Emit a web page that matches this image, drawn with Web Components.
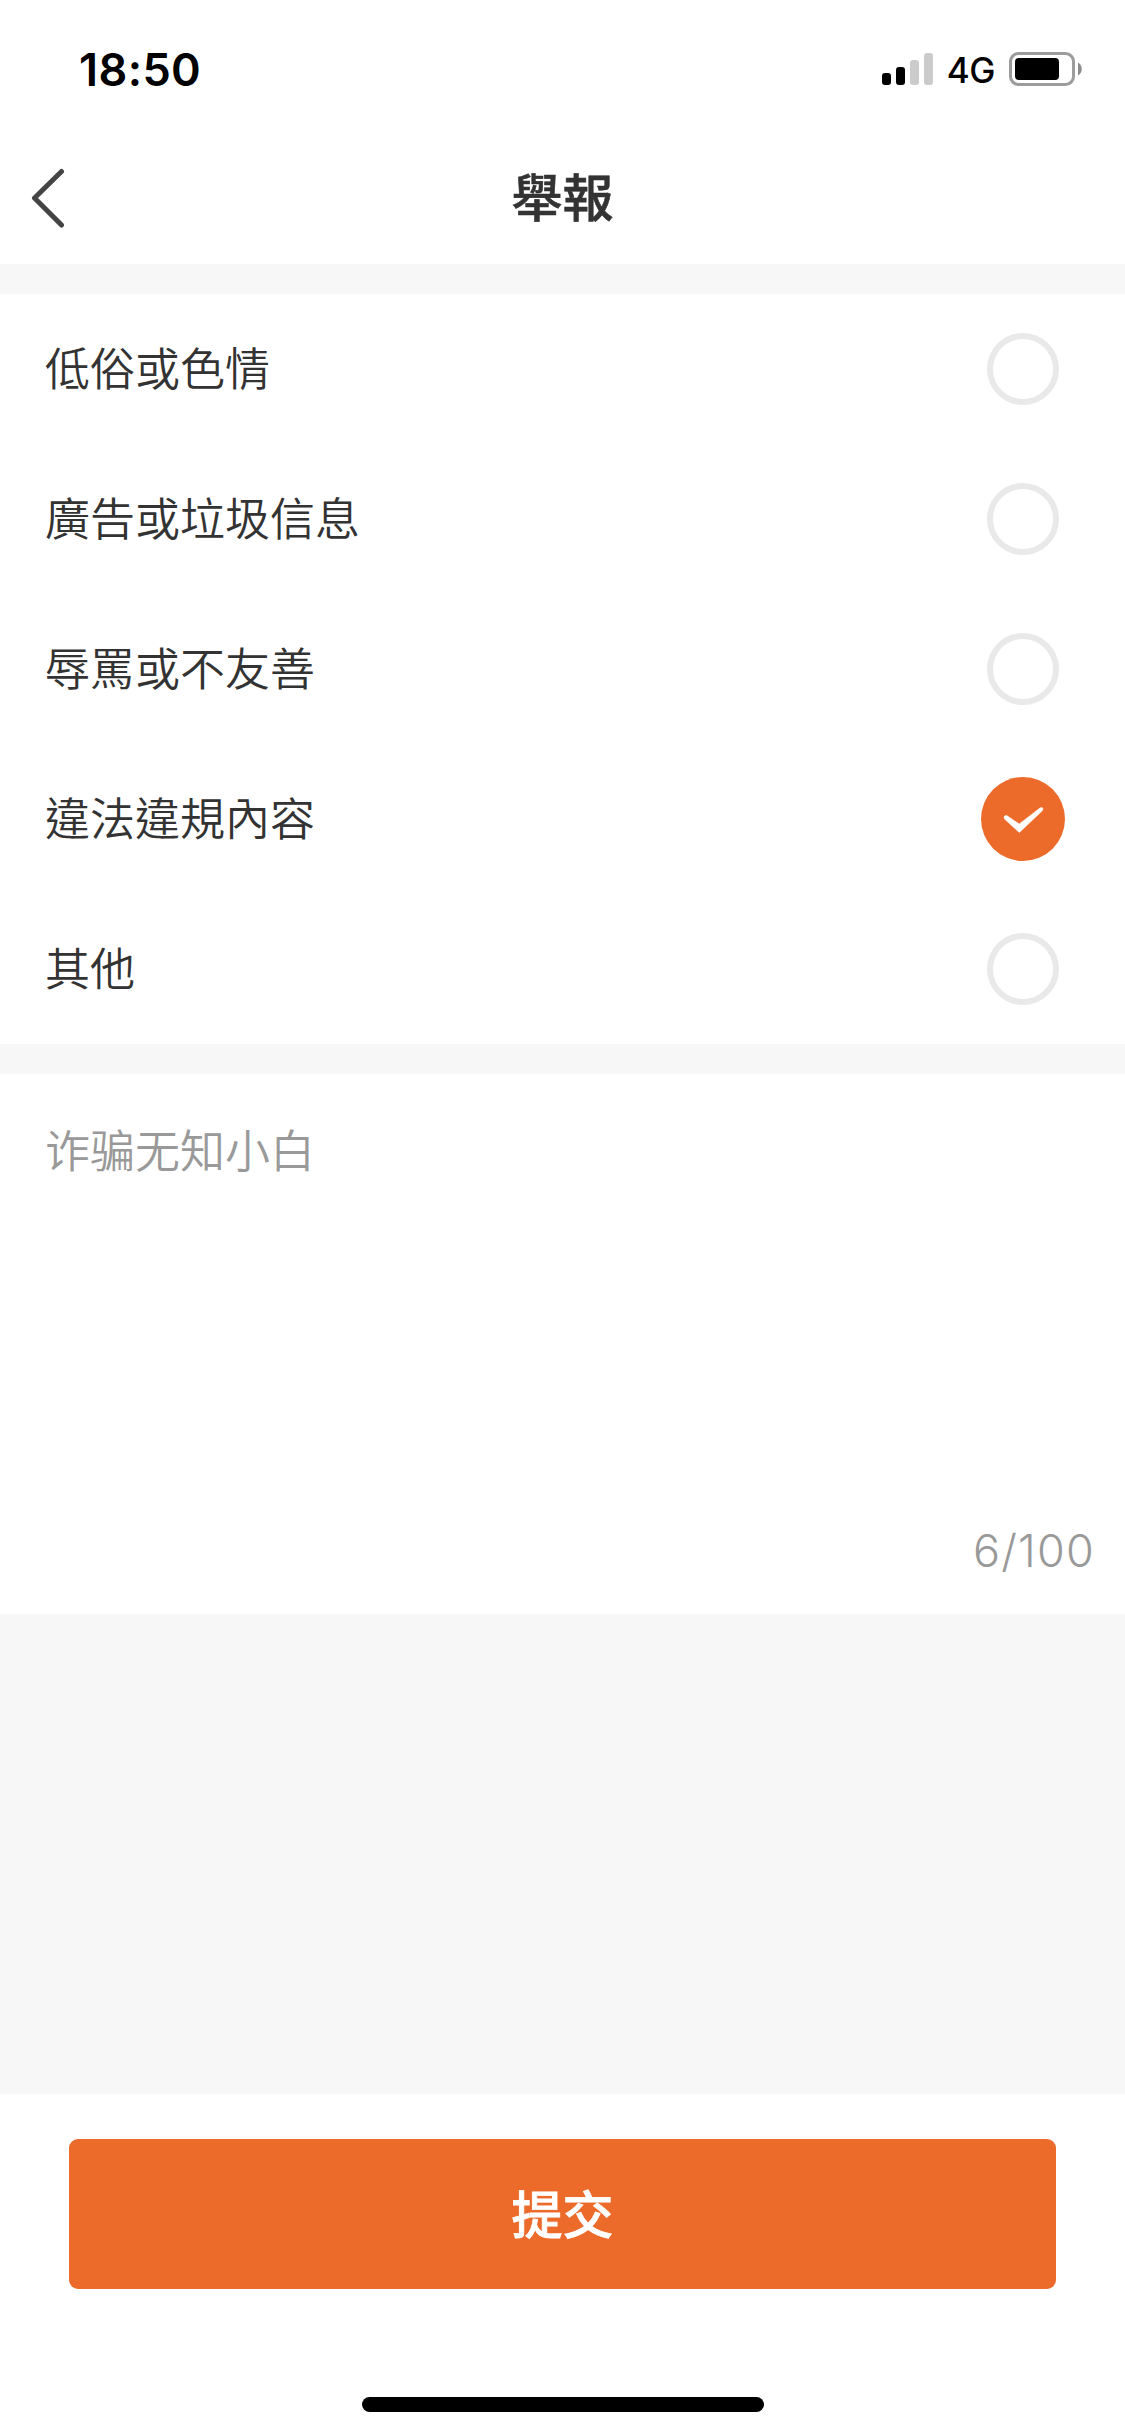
<!DOCTYPE html>
<html lang="zh-Hant">
<head>
<meta charset="utf-8">
<meta name="viewport" content="width=device-width">
<title>舉報</title>
<style>
  body {
    margin: 0;
    background-color: #f7f7f7;
    color: #333;
    font-family: Inter, "Noto Sans CJK TC", sans-serif;
    font-size: 45px;
  }
</style>
</head>
<body>
<report-page>
  <status-bar slot="header" time="18:50" network="4G"></status-bar>
  <nav-bar slot="header">舉報</nav-bar>
  <reason-list>
    <reason-item>低俗或色情</reason-item>
    <reason-item>廣告或垃圾信息</reason-item>
    <reason-item>辱罵或不友善</reason-item>
    <reason-item checked>違法違規內容</reason-item>
    <reason-item>其他</reason-item>
  </reason-list>
  <report-note max="100" lang="zh-Hans">诈骗无知小白</report-note>
  <submit-bar slot="footer">提交</submit-bar>
</report-page>

<script>
/**
 * Creates a template element from markup.
 *
 * @param {string} html the markup.
 * @returns {HTMLTemplateElement} The template.
 */
function createTemplate (html) {
  const template = document.createElement('template')
  template.innerHTML = html
  return template
}

/**
 * Base class which clones the template of the element into its shadow root.
 */
class BaseElement extends HTMLElement {
  constructor () {
    super()
    this.attachShadow({ mode: 'open' })
    this.shadowRoot.appendChild(this.constructor.template.content.cloneNode(true))
  }
}

customElements.define('report-page',
  /**
   * The page frame: header, content and footer.
   */
  class extends BaseElement {
    static template = createTemplate(`
      <style>
        :host {
          display: flex;
          flex-direction: column;
          height: 2436px;
        }
        main {
          flex: 1;
          display: flex;
          flex-direction: column;
          gap: 30px;
          padding-top: 30px;
        }
      </style>
      <slot name="header"></slot>
      <main><slot></slot></main>
      <slot name="footer"></slot>
    `)
  }
)

customElements.define('status-bar',
  /**
   * The phone's status bar.
   */
  class extends BaseElement {
    static template = createTemplate(`
      <style>
        :host {
          display: flex;
          justify-content: space-between;
          align-items: center;
          box-sizing: border-box;
          height: 132px;
          padding: 6px 42px 0 79px;
          background-color: #fff;
          color: #000;
        }
        .time {
          font-weight: 600;
          letter-spacing: 0.4px;
        }
        .right {
          display: flex;
          align-items: center;
        }
        .network {
          margin: 2px 14px 0 13px;
          font-size: 35px;
          font-weight: 500;
          letter-spacing: -0.5px;
        }
        svg {
          display: block;
        }
      </style>
      <span class="time"></span>
      <div class="right">
        <svg width="52" height="34" viewBox="0 0 52 34">
          <rect x="0" y="21" width="9" height="12" rx="3"/>
          <rect x="14" y="15" width="9" height="18" rx="3"/>
          <rect x="28" y="8" width="9" height="25" rx="3" fill="#cbcbcb"/>
          <rect x="42" y="1" width="9" height="32" rx="3" fill="#cbcbcb"/>
        </svg>
        <span class="network"></span>
        <svg width="74" height="34" viewBox="0 0 74 34">
          <rect x="1.5" y="1.5" width="63" height="31" rx="8" fill="none" stroke="#9c9c9c" stroke-width="3"/>
          <rect x="6" y="6" width="44" height="22" rx="4"/>
          <path d="M69 10.5c5 2.5 5 10.500 0 13z" fill="#8c8c8c"/>
        </svg>
      </div>
    `)

    /**
     * Called after the element is inserted to the DOM.
     */
    connectedCallback () {
      this.shadowRoot.querySelector('.time').textContent = this.getAttribute('time')
      this.shadowRoot.querySelector('.network').textContent = this.getAttribute('network')
    }
  }
)

customElements.define('nav-bar',
  /**
   * Title bar with a back button.
   */
  class extends BaseElement {
    static template = createTemplate(`
      <style>
        :host {
          display: grid;
          grid-template-columns: 100px 1fr 100px;
          align-items: center;
          height: 132px;
          background-color: #fff;
        }
        button {
          display: block;
          padding: 0 0 0 30px;
          border: 0;
          background: none;
        }
        svg {
          display: block;
        }
        h1 {
          margin: 0;
          padding-top: 2px;
          font-size: 51px;
          font-weight: 500;
          line-height: 128px;
          text-align: center;
          -webkit-text-stroke: 0.6px currentColor;
        }
      </style>
      <button type="button" aria-label="返回">
        <svg width="36" height="60" viewBox="0 0 36 60" fill="none" stroke="#444" stroke-width="5" stroke-linecap="round" stroke-linejoin="round">
          <path d="M31.500 3.500L4.500 30l27 27"/>
        </svg>
      </button>
      <h1><slot></slot></h1>
    `)
  }
)

customElements.define('reason-list',
  /**
   * The list of reasons, one can be checked at a time.
   */
  class extends BaseElement {
    static template = createTemplate(`
      <style>
        :host {
          display: flex;
          flex-direction: column;
          background-color: #fff;
        }
      </style>
      <slot></slot>
    `)

    /**
     * Called after the element is inserted to the DOM.
     */
    connectedCallback () {
      this.addEventListener('click', event => {
        const item = event.target.closest('reason-item')
        if (item) {
          this.querySelectorAll('reason-item').forEach(el => el.toggleAttribute('checked', el === item))
        }
      })
    }
  }
)

customElements.define('reason-item',
  /**
   * A reason with a round check mark.
   */
  class extends BaseElement {
    static template = createTemplate(`
      <style>
        :host {
          display: flex;
          justify-content: space-between;
          align-items: center;
          height: 150px;
          padding: 0 60px 0 45px;
        }
        .label {
          padding-top: 1px;
          font-weight: 350;
          line-height: 66px;
        }
        svg {
          display: block;
        }
        .on,
        :host([checked]) .off {
          display: none;
        }
        :host([checked]) .on {
          display: block;
        }
      </style>
      <span class="label"><slot></slot></span>
      <svg width="84" height="84" viewBox="0 0 84 84">
        <circle class="off" cx="42" cy="42" r="33" fill="none" stroke="#e9e9e9" stroke-width="6"/>
        <g class="on">
          <circle cx="42" cy="42" r="42" fill="#ec6b2b"/>
          <path d="M23.500 42q-1-2.500.5-3.200 1.200-.6 2.500.3L38.300 47 59 31q1.700-1 2.600 0 .8 1.500-.6 3L38.300 55.500z" fill="#fff" stroke="#fff" stroke-width=".6" stroke-linejoin="round"/>
        </g>
      </svg>
    `)
  }
)

customElements.define('report-note',
  /**
   * The note text with a character counter.
   */
  class extends BaseElement {
    static template = createTemplate(`
      <style>
        :host {
          display: flex;
          flex-direction: column;
          justify-content: space-between;
          box-sizing: border-box;
          height: 540px;
          padding: 42px 30px 33px 45px;
          background-color: #fff;
          color: #999;
        }
        p {
          margin: 0;
          font-family: "Noto Sans CJK SC", sans-serif;
          font-weight: 350;
          line-height: 66px;
        }
        .count {
          align-self: flex-end;
          font-weight: 300;
          letter-spacing: 1.2px;
          line-height: 60px;
        }
      </style>
      <p><slot></slot></p>
      <span class="count"></span>
    `)

    /**
     * Called after the element is inserted to the DOM.
     */
    connectedCallback () {
      const length = this.textContent.trim().length
      this.shadowRoot.querySelector('.count').textContent = `${length}/${this.getAttribute('max')}`
    }
  }
)

customElements.define('submit-bar',
  /**
   * Submit button and the home indicator.
   */
  class extends BaseElement {
    static template = createTemplate(`
      <style>
        :host {
          display: flex;
          flex-direction: column;
          align-items: center;
          justify-content: space-between;
          box-sizing: border-box;
          height: 342px;
          padding: 45px 69px 24px;
          background-color: #fff;
        }
        button {
          width: 100%;
          height: 150px;
          padding: 0 0 5px;
          border: 0;
          border-radius: 9px;
          background-color: #ec6b2b;
          color: #fff;
          font: inherit;
          font-size: 51px;
          font-weight: 500;
          -webkit-text-stroke: 0.8px currentColor;
        }
        .home {
          width: 402px;
          height: 15px;
          border-radius: 8px;
          background-color: #000;
        }
      </style>
      <button type="button"><slot></slot></button>
      <div class="home"></div>
    `)
  }
)
</script>
</body>
</html>
